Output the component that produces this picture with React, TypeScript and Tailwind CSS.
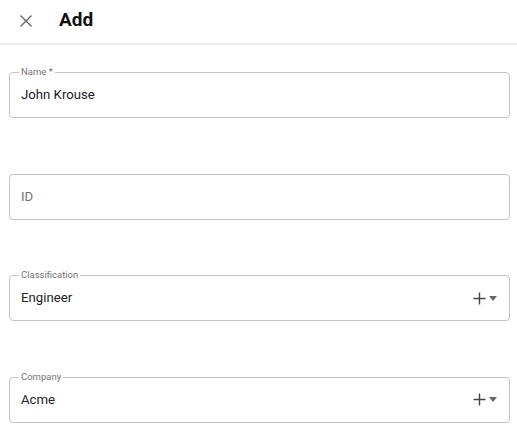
import React from "react";

const Field = ({
  label,
  value,
  placeholder,
  select,
}: {
  label?: string;
  value?: string;
  placeholder?: string;
  select?: boolean;
}) => {
  return (
    <div className="relative h-[46px] w-[501px] rounded-[4px] border border-[#c4c4c4]">
      {label && (
        <span className="absolute left-[9px] top-[-8px] bg-white px-[2px] text-[9.5px] leading-[14px] text-[#757575]">
          {label}
        </span>
      )}
      <div className="flex h-full items-center pl-[11px] pr-[12px]">
        {value ? (
          <span className="text-[13.2px] text-[#222]">{value}</span>
        ) : (
          <span className="text-[13.2px] text-[#757575]">{placeholder}</span>
        )}
        {select && (
          <div className="ml-auto flex items-center gap-[3px]">
            <svg width="13" height="13" viewBox="0 0 13 13">
              <path d="M6.5 0.5v12M0.5 6.5h12" stroke="#444" strokeWidth="1.4" />
            </svg>
            <svg width="8" height="5" viewBox="0 0 8 5">
              <path d="M0 0h8L4 5z" fill="#666" />
            </svg>
          </div>
        )}
      </div>
    </div>
  );
};

const App = () => {
  return (
    <div className="h-[430px] w-[517px] bg-white font-['Roboto',sans-serif]">
      <header className="flex h-[45px] items-center border-b-2 border-[#ececec] pb-[2px]">
        <div className="ml-[19px] flex h-[14px] w-[14px] items-center justify-center">
          <svg width="12" height="12" viewBox="0 0 12 12">
            <path d="M0.5 0.5l11 11M11.5 0.5l-11 11" stroke="#666" strokeWidth="1.4" />
          </svg>
        </div>
        <h1 className="ml-[26px] text-[19px] font-bold text-[#111]">Add</h1>
      </header>
      <div className="flex flex-col gap-[55.5px] pl-[9px] pt-[27px]">
        <Field label="Name *" value="John Krouse" />
        <Field placeholder="ID" />
        <Field label="Classification" value="Engineer" select />
        <Field label="Company" value="Acme" select />
      </div>
    </div>
  );
};

export default App;
